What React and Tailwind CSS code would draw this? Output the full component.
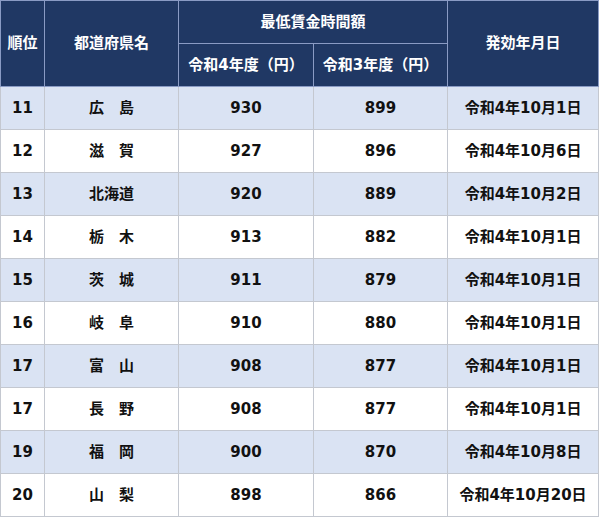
export default function App() {
  const rows = [
    ["11", "広　島", "930", "899", "令和4年10月1日"],
    ["12", "滋　賀", "927", "896", "令和4年10月6日"],
    ["13", "北海道", "920", "889", "令和4年10月2日"],
    ["14", "栃　木", "913", "882", "令和4年10月1日"],
    ["15", "茨　城", "911", "879", "令和4年10月1日"],
    ["16", "岐　阜", "910", "880", "令和4年10月1日"],
    ["17", "富　山", "908", "877", "令和4年10月1日"],
    ["17", "長　野", "908", "877", "令和4年10月1日"],
    ["19", "福　岡", "900", "870", "令和4年10月8日"],
    ["20", "山　梨", "898", "866", "令和4年10月20日"],
  ];
  const th = "border border-[#8a9bc4] bg-[#203864] text-white font-bold text-center align-middle p-0";
  const td = "border border-[#c4c8d0] text-[#111] font-bold text-center align-middle p-0";
  return (
    <div
      className="w-[600px] h-[519px] bg-white"
      style={{ fontFamily: '"DejaVu Sans", "Noto Sans CJK JP", sans-serif' }}
    >
      <table className="table-fixed border-collapse text-[15px] leading-none w-[598px]">
        <colgroup>
          <col className="w-[44px]" />
          <col className="w-[134px]" />
          <col className="w-[135px]" />
          <col className="w-[134px]" />
          <col className="w-[151px]" />
        </colgroup>
        <thead>
          <tr className="h-[43px]">
            <th rowSpan={2} className={th}>順位</th>
            <th rowSpan={2} className={th}>都道府県名</th>
            <th colSpan={2} className={th}>最低賃金時間額</th>
            <th rowSpan={2} className={th}>発効年月日</th>
          </tr>
          <tr className="h-[43px]">
            <th className={th}>令和4年度（円）</th>
            <th className={th}>令和3年度（円）</th>
          </tr>
        </thead>
        <tbody>
          {rows.map((r, i) => (
            <tr key={i} className={`h-[43px] ${i % 2 === 0 ? "bg-[#dae3f3]" : "bg-white"}`}>
              {r.map((c, j) => (
                <td key={j} className={td}>{c}</td>
              ))}
            </tr>
          ))}
        </tbody>
      </table>
    </div>
  );
}
